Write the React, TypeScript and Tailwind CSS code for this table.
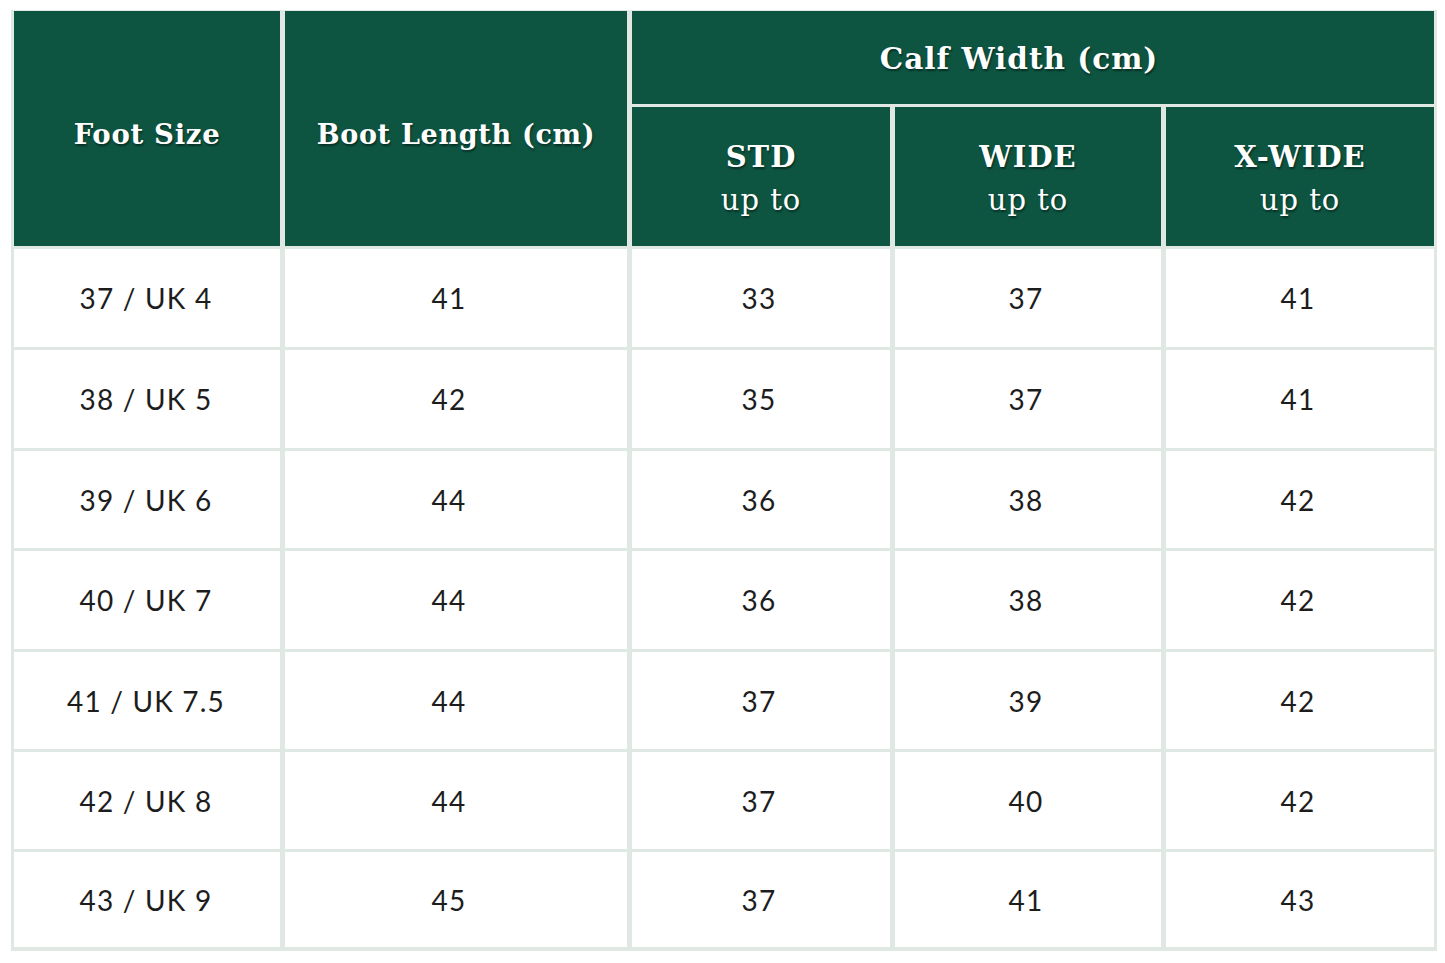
import React from "react";

const rows = [
  ["37 / UK 4", "41", "33", "37", "41"],
  ["38 / UK 5", "42", "35", "37", "41"],
  ["39 / UK 6", "44", "36", "38", "42"],
  ["40 / UK 7", "44", "36", "38", "42"],
  ["41 / UK 7.5", "44", "37", "39", "42"],
  ["42 / UK 8", "44", "37", "40", "42"],
  ["43 / UK 9", "45", "37", "41", "43"],
];

const hd =
  "bg-[#0d5541] text-white flex flex-col items-center justify-center font-bold [font-family:'DejaVu_Serif','Noto_Serif',serif] tracking-[0.7px] [text-shadow:1px_2px_2px_rgba(0,0,0,0.45)]";

export default function App() {
  return (
    <div className="w-[1445px] h-[963px] bg-white">
      <div className="ml-[11px] mt-[10px] w-[1426px] bg-[#dfe8e2] px-[3px] pt-[1px] pb-[4px] grid grid-cols-[266px_342px_258px_266px_268px] grid-rows-[93px_139px_98px_98px_97px_98px_97px_97px_95px] gap-x-[5px] gap-y-[3px]">
        <div className={hd + " row-span-2 pt-[12px] text-[27.5px]"}>Foot Size</div>
        <div className={hd + " row-span-2 pt-[14px] text-[27px]"}>Boot Length (cm)</div>
        <div className={hd + " col-span-3 pr-[28px] pt-[4px] text-[29.5px] tracking-[1px]"}>Calf Width (cm)</div>
        {["STD", "WIDE", "X-WIDE"].map((t) => (
          <div key={t} className={hd + " leading-[43px] pt-[4px] text-[29px] tracking-[1px]"}>
            <span>{t}</span>
            <span className="font-normal">up to</span>
          </div>
        ))}
        {rows.map((r, i) =>
          r.map((c, j) => (
            <div
              key={i + "-" + j}
              className={
                "bg-white flex items-center justify-center text-[#1d1d1d] text-[28px] tracking-[1.2px] [font-family:Lato,'Open_Sans',sans-serif]" +
                (j === 1 ? " pr-[14px]" : j === 0 ? " pr-[2px]" : " pr-[4px]")
              }
            >
              {c}
            </div>
          ))
        )}
      </div>
    </div>
  );
}
